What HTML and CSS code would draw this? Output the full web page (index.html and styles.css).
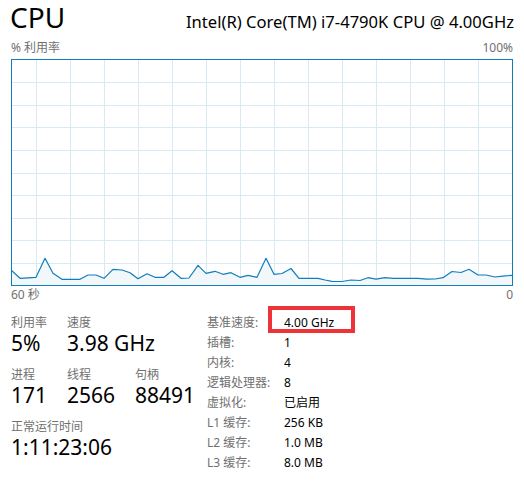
FILE: index.html
```html
<!DOCTYPE html>
<html lang="zh-CN">
<head>
<meta charset="utf-8">
<title>CPU</title>
<link rel="stylesheet" href="styles.css">
</head>
<body>
<div class="page">
  <header class="header">
    <div class="title">CPU</div>
    <div class="model">Intel(R) Core(TM) i7-4790K CPU @ 4.00GHz</div>
  </header>
  <div class="axis axis-top"><span>% 利用率</span><span>100%</span></div>
  <div class="graph">
    <svg class="graph-svg" width="502" height="227" viewBox="11 59 502 227" xmlns="http://www.w3.org/2000/svg">
      <g class="grid" stroke="#d9eaf4" stroke-width="1" fill="none">
        <line x1="11" y1="82.5" x2="513" y2="82.5"/>
        <line x1="11" y1="105.5" x2="513" y2="105.5"/>
        <line x1="11" y1="127.5" x2="513" y2="127.5"/>
        <line x1="11" y1="150.5" x2="513" y2="150.5"/>
        <line x1="11" y1="173.5" x2="513" y2="173.5"/>
        <line x1="11" y1="195.5" x2="513" y2="195.5"/>
        <line x1="11" y1="218.5" x2="513" y2="218.5"/>
        <line x1="11" y1="240.5" x2="513" y2="240.5"/>
        <line x1="11" y1="263.5" x2="513" y2="263.5"/>
        <line x1="36.5" y1="59" x2="36.5" y2="286"/>
        <line x1="70.5" y1="59" x2="70.5" y2="286"/>
        <line x1="104.5" y1="59" x2="104.5" y2="286"/>
        <line x1="138.5" y1="59" x2="138.5" y2="286"/>
        <line x1="172.5" y1="59" x2="172.5" y2="286"/>
        <line x1="206.5" y1="59" x2="206.5" y2="286"/>
        <line x1="240.5" y1="59" x2="240.5" y2="286"/>
        <line x1="274.5" y1="59" x2="274.5" y2="286"/>
        <line x1="308.5" y1="59" x2="308.5" y2="286"/>
        <line x1="342.5" y1="59" x2="342.5" y2="286"/>
        <line x1="376.5" y1="59" x2="376.5" y2="286"/>
        <line x1="410.5" y1="59" x2="410.5" y2="286"/>
        <line x1="444.5" y1="59" x2="444.5" y2="286"/>
        <line x1="478.5" y1="59" x2="478.5" y2="286"/>
      </g>
      <polygon fill="#f1f6fa" fill-opacity="0.9" points="11,285 11,270 20,278.3 36,277.3 45,258.3 53,273.3 62,279.3 70,279.3 80,279.3 88,275 96,275 104,278.3 113,269.3 122,270 130,272.7 138,278.7 147,273.7 155,277.3 164,277.3 172,270.7 181,278.3 189,278 198,265.3 206,273.3 215,271.3 223,274.3 231,272.7 240,277.3 248,275.3 257,277.3 266,258.3 274,274.3 282,273.5 291,268.5 299,278.3 308,278.3 318,278.3 325,280 332,281.3 342,281.5 351,280 360,280.5 368,277.7 376,279.2 385,277.7 393,278.3 401,278.3 410,278.3 418,278.3 427,279.2 435,279 443,277.7 452,271.5 461,272.5 469,269.3 478,275 486,275 495,277 503,276.2 512,275.3 512,285"/>
      <polyline fill="none" stroke="#117dbb" stroke-width="1.2" stroke-linejoin="round" points="11,270 20,278.3 36,277.3 45,258.3 53,273.3 62,279.3 70,279.3 80,279.3 88,275 96,275 104,278.3 113,269.3 122,270 130,272.7 138,278.7 147,273.7 155,277.3 164,277.3 172,270.7 181,278.3 189,278 198,265.3 206,273.3 215,271.3 223,274.3 231,272.7 240,277.3 248,275.3 257,277.3 266,258.3 274,274.3 282,273.5 291,268.5 299,278.3 308,278.3 318,278.3 325,280 332,281.3 342,281.5 351,280 360,280.5 368,277.7 376,279.2 385,277.7 393,278.3 401,278.3 410,278.3 418,278.3 427,279.2 435,279 443,277.7 452,271.5 461,272.5 469,269.3 478,275 486,275 495,277 503,276.2 512,275.3"/>
      <rect x="11.5" y="59.5" width="501" height="226" fill="none" stroke="#117dbb" stroke-width="1"/>
    </svg>
  </div>
  <div class="axis axis-bottom"><span>60 秒</span><span>0</span></div>

  <section class="stats">
    <div class="dynamic">
      <div class="group">
        <div class="stat"><div class="label">利用率</div><div class="value">5%</div></div>
        <div class="stat"><div class="label">速度</div><div class="value">3.98 GHz</div></div>
      </div>
      <div class="group">
        <div class="stat"><div class="label">进程</div><div class="value">171</div></div>
        <div class="stat"><div class="label">线程</div><div class="value">2566</div></div>
        <div class="stat"><div class="label">句柄</div><div class="value">88491</div></div>
      </div>
      <div class="group">
        <div class="stat wide"><div class="label">正常运行时间</div><div class="value">1:11:23:06</div></div>
      </div>
    </div>
    <dl class="specs">
      <dt>基准速度:</dt><dd><span class="hl">4.00 GHz</span></dd>
      <dt>插槽:</dt><dd>1</dd>
      <dt>内核:</dt><dd>4</dd>
      <dt>逻辑处理器:</dt><dd>8</dd>
      <dt>虚拟化:</dt><dd>已启用</dd>
      <dt>L1 缓存:</dt><dd>256 KB</dd>
      <dt>L2 缓存:</dt><dd>1.0 MB</dd>
      <dt>L3 缓存:</dt><dd>8.0 MB</dd>
    </dl>
  </section>
</div>
</body>
</html>
```

FILE: styles.css
```css
*, *::before, *::after { box-sizing: border-box; }
html, body { margin: 0; padding: 0; background: #ffffff; }
body {
  font-family: "Noto Sans", "Noto Sans CJK SC", sans-serif;
  color: #000;
  width: 524px;
  height: 481px;
  overflow: hidden;
}
.page {
  padding: 0 11px;
}
.header {
  display: flex;
  justify-content: space-between;
  align-items: baseline;
  height: 40px;
}
.title {
  font-size: 28px;
  line-height: 38px;
  margin-top: -2px;
  margin-left: -1px;
}
.model {
  font-size: 16.6px;
  line-height: 22px;
  margin-right: -1px;
}
.axis {
  display: flex;
  justify-content: space-between;
  font-size: 12px;
  line-height: 16px;
  height: 16px;
  color: #707070;
}
.axis-top { height: 19px; }
.axis-bottom { margin-top: 1px; }
.graph { height: 227px; }
.graph-svg { display: block; }

.stats {
  display: flex;
  margin-top: 11px;
}
.dynamic {
  width: 196px;
  flex: none;
}
.group {
  display: grid;
  grid-template-columns: 56px 68px auto;
  margin-bottom: 11px;
}
.stat { white-space: nowrap; }
.stat.wide { grid-column: 1 / -1; }
.label {
  font-size: 12px;
  line-height: 17px;
  height: 17px;
  color: #707070;
}
.value {
  font-size: 21px;
  line-height: 24px;
  height: 24px;
}
.specs {
  display: grid;
  grid-template-columns: 77px auto;
  grid-auto-rows: 20px;
  margin: -1px 0 0;
  font-size: 12px;
  line-height: 20px;
  white-space: nowrap;
}
.specs dt { color: #707070; }
.specs dd { margin: 0; }
.hl { position: relative; }
.hl::after {
  content: "";
  position: absolute;
  left: -16px;
  top: -8px;
  width: 87px;
  height: 27px;
  border: 4px solid #ee3338;
}
```
